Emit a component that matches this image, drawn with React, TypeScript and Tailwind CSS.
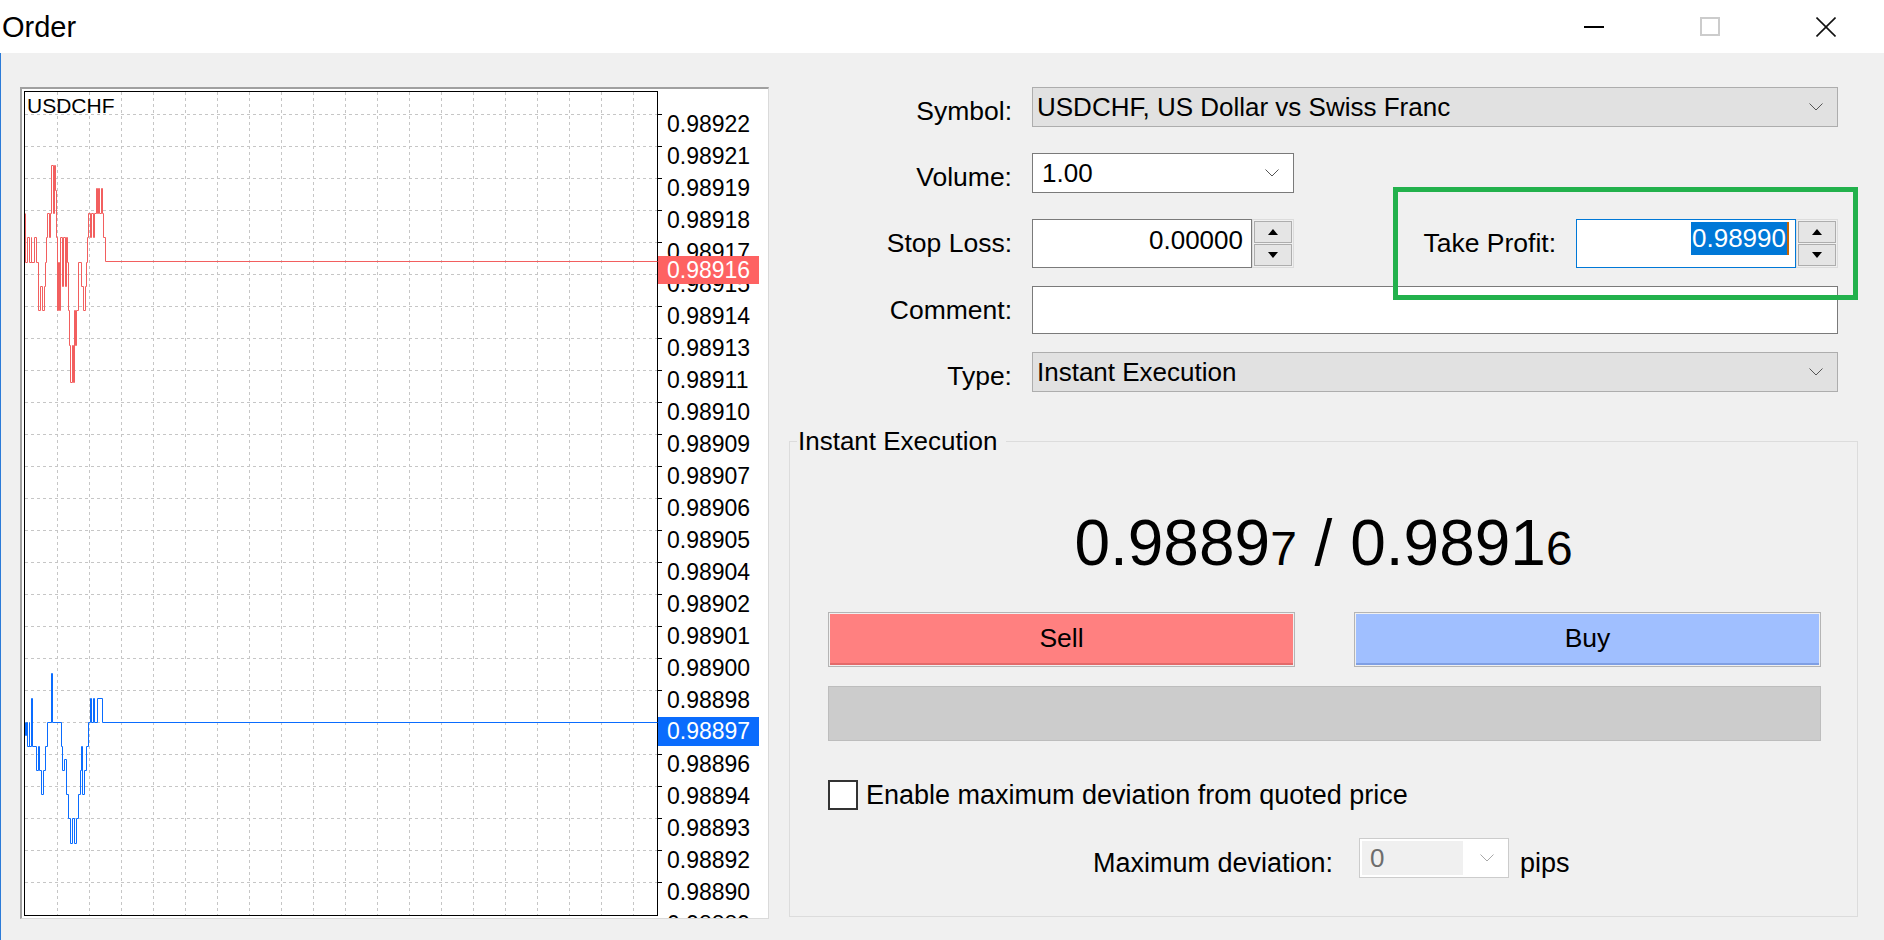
import React from "react";

const LABELS = [
  "0.98922", "0.98921", "0.98919", "0.98918", "0.98917", "0.98915", "0.98914",
  "0.98913", "0.98911", "0.98910", "0.98909", "0.98907", "0.98906", "0.98905",
  "0.98904", "0.98902", "0.98901", "0.98900", "0.98898", "0.98897", "0.98896",
  "0.98894", "0.98893", "0.98892", "0.98890", "0.98889",
];

const RED =
  "M25,213 V262 H27 V237 H29 V262 H31 V237 V262 H34 V237 H36 V262 H38 V310 H40 V286 H42 V310 H44 V286 H45 V262 H46 V237 H47 V213 H49 V237 H50 V213 H51 V165 H53 V213 H54 V165 H55 V190 H56 V237 H57 V310 H58 V262 H59 V310 H60 V237 H62 V286 H63 V237 H65 V286 H66 V237 H67 V262 H68 V310 H69 V345 H70 V382 H72 V345 H73 V382 H74 V310 H75 V345 H76 V310 H78 V262 H81 V286 H83 V310 H85 V286 H86 V262 H87 V237 H88 V213 H90 V237 H91 V213 H93 V237 H94 V213 H96 V188 H97 V213 H98 V188 H99 V213 H101 V188 H102 V213 H103 V237 H105 V261 H657";

const BLUE =
  "M25,722 V735 H26 V722 H27 V746 H29 V722 V746 H31 V698 H32 V746 H36 V770 H38 V746 H39 V770 H41 V794 H43 V770 H45 V746 H47 V722 H51 V673 H52 V722 H61 V746 H62 V770 H64 V759 H66 V794 H68 V818 H70 V843 H72 V818 H74 V843 H76 V818 H78 V794 H80 V770 H81 V746 H82 V794 H84 V770 H86 V746 H88 V722 H90 V698 H91 V722 H93 V698 H94 V722 H97 V698 H102 V722 H657";

function Chevron({ color = "#555555" }: { color?: string }) {
  return (
    <svg width="14" height="8" viewBox="0 0 14 8">
      <polyline points="0.5,0.5 7,7 13.5,0.5" fill="none" stroke={color} strokeWidth="1" />
    </svg>
  );
}

function TitleBar() {
  return (
    <div className="h-[53px] bg-white flex items-center">
      <span className="pl-[2px] text-[29px] leading-[34px]">Order</span>
      <div className="ml-auto flex h-full">
        <div className="w-[116px] h-full flex items-center justify-center">
          <div className="w-[20px] h-[2px] bg-black" />
        </div>
        <div className="w-[116px] h-full flex items-center justify-center">
          <div className="w-[20px] h-[19px] border-2 border-[#cccccc]" />
        </div>
        <div className="w-[116px] h-full flex items-center justify-center">
          <svg width="20" height="20" viewBox="0 0 20 20">
            <line x1="0.5" y1="0.5" x2="19.5" y2="19.5" stroke="#111" strokeWidth="1.6" />
            <line x1="19.5" y1="0.5" x2="0.5" y2="19.5" stroke="#111" strokeWidth="1.6" />
          </svg>
        </div>
      </div>
    </div>
  );
}

function ChartPanel() {
  const vlines = Array.from({ length: 19 }, (_, i) => 32 * (i + 1) + 0.5);
  const hlines = Array.from({ length: 25 }, (_, i) => 22 + 32 * i + 0.5);
  return (
    <div className="w-[749px] h-[832px] shrink-0 bg-white border-t-2 border-l-2 border-r border-b border-[#a0a0a0] border-r-[#dadada] border-b-[#dadada] flex items-start">
      <div className="relative ml-[2px] mt-[2px] w-[634px] h-[825px] shrink-0 border border-black">
        <svg width="632" height="823" viewBox="0 0 632 823" className="block overflow-visible">
          {vlines.map((x) => (
            <line key={"v" + x} x1={x} y1={0} x2={x} y2={823} stroke="#c6c6c6" strokeWidth="1" strokeDasharray="3 3" />
          ))}
          {hlines.map((y) => (
            <line key={"h" + y} x1={0} y1={y} x2={632} y2={y} stroke="#c6c6c6" strokeWidth="1" strokeDasharray="3 3" />
          ))}
          {hlines.map((y) => (
            <line key={"t" + y} x1={632} y1={y} x2={637} y2={y} stroke="#000" strokeWidth="1" />
          ))}
          <g transform="translate(-24.5 -91.5)">
            <path d={RED} fill="none" stroke="#f25f5f" strokeWidth="1" />
            <path d={BLUE} fill="none" stroke="#0a6cff" strokeWidth="1" />
          </g>
        </svg>
        <span className="absolute left-[2px] top-[2px] text-[21px] leading-[24px]">USDCHF</span>
      </div>
      <div className="relative w-[110px] h-[829px] overflow-hidden pt-[19px] pl-[9px]">
        {LABELS.map((l) => (
          <div key={l} className="h-[32px] text-[23px] leading-[32px]">
            {l}
          </div>
        ))}
        <div className="absolute left-0 top-[167px] w-[101px] h-[28px] bg-[#fe6262] text-white text-[23px] leading-[28px] pl-[9px]">
          0.98916
        </div>
        <div className="absolute left-0 top-[628px] w-[101px] h-[29px] bg-[#0a6cfd] text-white text-[23px] leading-[29px] pl-[9px]">
          0.98897
        </div>
      </div>
    </div>
  );
}

function Label({ children, w = "w-[223px]" }: { children: React.ReactNode; w?: string }) {
  return <div className={`${w} shrink-0 text-right text-[26.5px] leading-[30px] pt-[9px]`}>{children}</div>;
}

function SpinButtons() {
  return (
    <div className="w-[42px] h-full shrink-0 border border-[#dcdcdc] flex flex-col p-[1px] gap-[1px] bg-[#f0f0f0]">
      <div className="flex-1 bg-[#e5e5e5] border border-[#adadad] flex items-center justify-center">
        <svg width="10" height="6" viewBox="0 0 10 6">
          <polygon points="5,0 10,6 0,6" fill="#000" />
        </svg>
      </div>
      <div className="flex-1 bg-[#e5e5e5] border border-[#adadad] flex items-center justify-center">
        <svg width="10" height="6" viewBox="0 0 10 6">
          <polygon points="0,0 10,0 5,6" fill="#000" />
        </svg>
      </div>
    </div>
  );
}

function OrderForm() {
  return (
    <div className="relative ml-[20px] w-[1069px] flex flex-col">
      {/* Symbol */}
      <div className="flex items-start h-[40px]">
        <Label>Symbol:</Label>
        <div className="ml-[20px] w-[806px] h-[40px] bg-[#e1e1e1] border border-[#adadad] flex items-center pl-[4px] text-[26px]">
          <span>USDCHF, US Dollar vs Swiss Franc</span>
          <span className="ml-auto mr-[14px] flex">
            <Chevron />
          </span>
        </div>
      </div>
      {/* Volume */}
      <div className="mt-[26px] flex items-start h-[40px]">
        <Label>Volume:</Label>
        <div className="ml-[20px] w-[262px] h-[40px] bg-white border border-[#7a7a7a] flex items-center pl-[9px] text-[26px]">
          <span>1.00</span>
          <span className="ml-auto mr-[14px] flex">
            <Chevron />
          </span>
        </div>
      </div>
      {/* Stop loss / Take profit */}
      <div className="mt-[26px] flex items-start h-[49px]">
        <Label>Stop Loss:</Label>
        <div className="ml-[20px] w-[262px] h-[49px] flex">
          <div className="w-[220px] h-full bg-white border border-[#7a7a7a] flex justify-end items-start pt-[5px] pr-[8px] text-[26px] leading-[30px]">
            0.00000
          </div>
          <SpinButtons />
        </div>
        <Label w="w-[262px]">Take Profit:</Label>
        <div className="ml-[20px] w-[262px] h-[49px] flex">
          <div className="w-[220px] h-full bg-white border border-[#0078d7] flex justify-end items-start pt-[2px] pr-[6px] text-[26px]">
            <span className="inline-block h-[33px] leading-[33px] bg-[#0078d7] text-white px-[1px]">0.98990</span>
            <span className="inline-block w-[2px] h-[33px] bg-[#c86400]" />
          </div>
          <SpinButtons />
        </div>
      </div>
      {/* Comment */}
      <div className="mt-[18px] flex items-start h-[48px]">
        <Label>Comment:</Label>
        <div className="ml-[20px] w-[806px] h-[48px] bg-white border border-[#7a7a7a]" />
      </div>
      {/* Type */}
      <div className="mt-[18px] flex items-start h-[40px]">
        <Label>Type:</Label>
        <div className="ml-[20px] w-[806px] h-[40px] bg-[#e1e1e1] border border-[#adadad] flex items-center pl-[4px] text-[26px]">
          <span>Instant Execution</span>
          <span className="ml-auto mr-[14px] flex">
            <Chevron />
          </span>
        </div>
      </div>

      {/* Group box */}
      <fieldset className="mt-[34px] w-[1069px] border border-[#dcdcdc] pb-[38px]">
        <legend className="ml-[7px] pl-[1px] pr-[9px] text-[26px] leading-[30px]">Instant Execution</legend>
        <div className="mt-[50px] h-[74px] text-center text-[64px] leading-[74px] whitespace-pre">
          <span>0.9889</span>
          <span className="text-[48px]">7</span>
          <span> / 0.9891</span>
          <span className="text-[48px]">6</span>
        </div>
        <div className="mt-[32px] ml-[38px] flex gap-[59px]">
          <div className="w-[467px] h-[55px] border border-[#b4b4b4] p-[1px]">
            <div className="w-full h-full bg-[#ff8080] border-b-2 border-[#e36a6a] flex items-center justify-center text-[26.5px]">
              Sell
            </div>
          </div>
          <div className="w-[467px] h-[55px] border border-[#b4b4b4] p-[1px]">
            <div className="w-full h-full bg-[#a0bfff] border-b-2 border-[#7f9fe4] flex items-center justify-center text-[26.5px]">
              Buy
            </div>
          </div>
        </div>
        <div className="mt-[19px] ml-[38px] w-[993px] h-[55px] bg-[#cccccc] border border-[#bdbdbd]" />
        <div className="mt-[39px] ml-[38px] flex items-center h-[30px]">
          <div className="w-[30px] h-[30px] border-2 border-[#333333] bg-white shrink-0" />
          <span className="ml-[8px] text-[27px] leading-[30px]">Enable maximum deviation from quoted price</span>
        </div>
        <div className="mt-[28px] ml-[303px] flex items-center h-[40px]">
          <div className="w-[238px] shrink-0 text-right text-[27px] leading-[30px] pt-[10px] whitespace-nowrap">
            Maximum deviation:
          </div>
          <div className="ml-[28px] w-[150px] h-[40px] border border-[#cccccc] bg-white p-[2px] flex items-center">
            <div className="w-[101px] h-full bg-[#f0f0f0] text-[#6d6d6d] text-[26px] pl-[8px] flex items-center">0</div>
            <span className="ml-auto mr-[12px] flex">
              <Chevron color="#a8a8a8" />
            </span>
          </div>
          <span className="ml-[11px] text-[27px] leading-[30px] pt-[10px]">pips</span>
        </div>
      </fieldset>

      {/* highlight annotation */}
      <div className="absolute left-[604px] top-[100px] w-[465px] h-[113px] border-[5px] border-[#22b14c] pointer-events-none" />
    </div>
  );
}

export default function App() {
  return (
    <div className="w-[1884px] h-[940px] bg-[#f0f0f0] font-['Liberation_Sans',Arial,sans-serif] text-black overflow-hidden">
      <TitleBar />
      <div className="flex items-start h-[887px] border-l border-[#2b7bd8] pt-[34px] pl-[19px]">
        <ChartPanel />
        <OrderForm />
      </div>
    </div>
  );
}
